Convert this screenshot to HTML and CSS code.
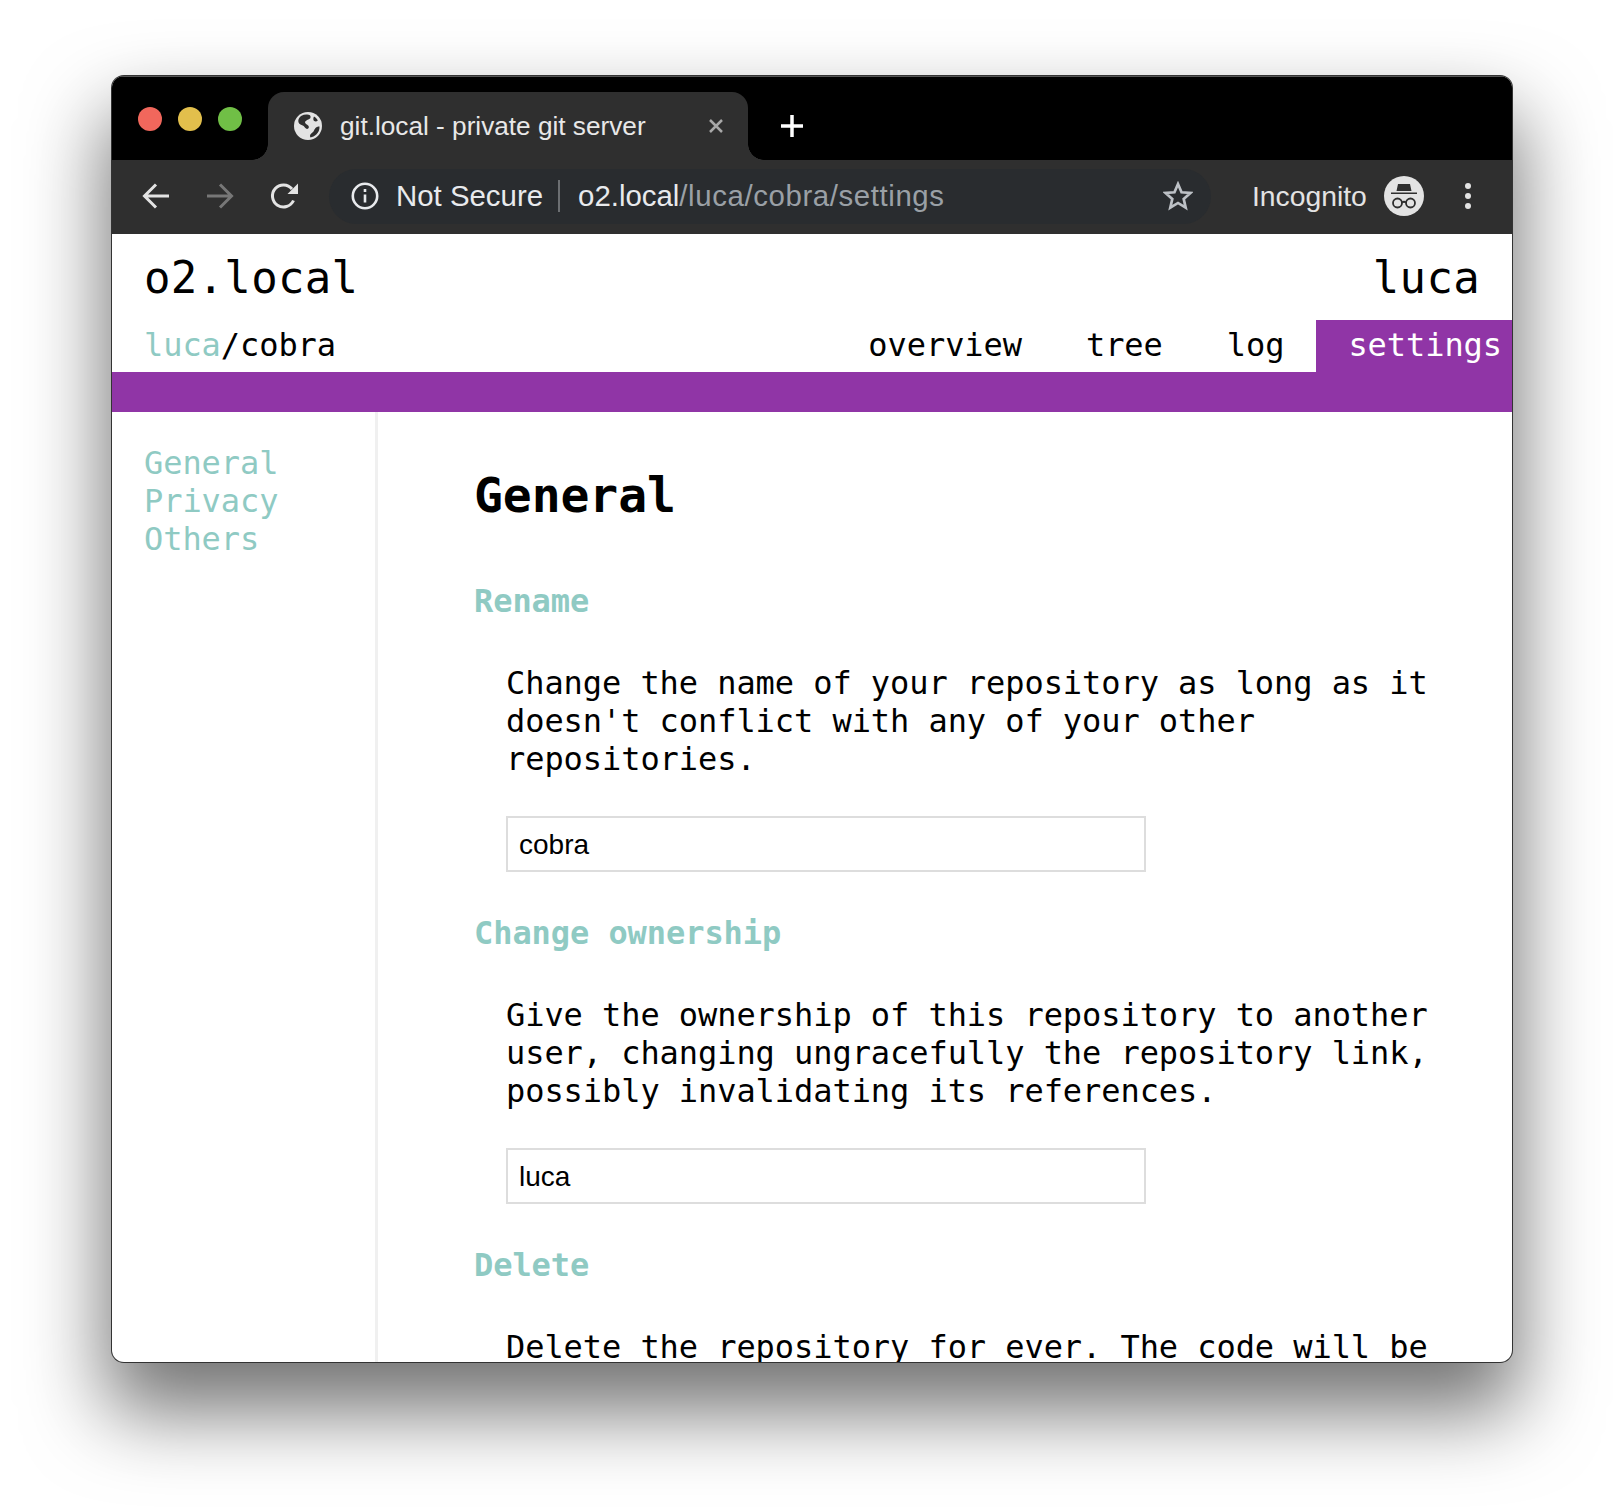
FILE: index.html
```html
<!DOCTYPE html>
<html>
<head>
  <title>git.local - private git server</title>
  <link rel="stylesheet" href="styles.css">
</head>
<body>
  <div class="window">
    <div class="tabstrip">
      <div class="lights">
        <span class="light red"></span>
        <span class="light yellow"></span>
        <span class="light green"></span>
      </div>
      <div class="browser-tab">
        <svg class="globe" viewBox="0 0 28 28">
          <circle cx="14" cy="14" r="14" fill="#e3e3e3"/>
          <path fill="#2f2f2f" d="M7 4C9 3 11 2.500 13 2.600c2.500.2 4 1 3.500 2.900-.5 2-3.500 2-5 3.800-1.300 1.500.5 2.800 2 3.700 1.500.9 1.800 2.500.7 3.500-1.200 1-2.700 0-3.700-1.500C9.500 13.500 8 13 6.500 12.500 4.800 11.800 3.800 9.500 4.500 7.500 5 6 6 5 7 4zM20 4.500c1.700 1 3 2.400 3.800 4-1 1-2.500 1.200-3.600.5-1.200-.8-1.100-3-.2-4.500zM25.500 14.500c.2 3-1 6-3.200 8-1.700 1.500-3.800 2.600-5.800 2.900-.8-.8-.6-2.200.3-3.300 1.400-1.600 2.700-2 3.200-3.500.5-1.600 1.600-3.200 3-3.700.9-.3 1.700-.4 2.500-.4z"/>
        </svg>
        <span class="tab-title">git.local - private git server</span>
        <svg class="tab-close" viewBox="0 0 16 16"><path d="M2 2l12 12M14 2L2 14"/></svg>
      </div>
      <svg class="new-tab" viewBox="0 0 24 24"><path d="M12 1v22M1 12h22"/></svg>
    </div>

    <div class="toolbar">
      <svg class="nav-icon" viewBox="0 0 28 28"><path d="M27 14H3M14 2.500L2.500 14 14 25.500"/></svg>
      <svg class="nav-icon dim" viewBox="0 0 28 28"><path d="M1 14h24M14 2.500L25.500 14 14 25.500"/></svg>
      <svg class="nav-icon" viewBox="0 0 28 28"><path d="M23.500 18.500A11 11 0 1 1 22 7"/><path class="solid" d="M28 1.500V12H17.500z"/></svg>
      <div class="omnibox">
        <svg class="info" viewBox="0 0 28 28">
          <circle cx="14" cy="14" r="12.200"/>
          <path d="M14 12.500v8M14 7v3"/>
        </svg>
        <span class="not-secure">Not Secure</span>
        <span class="omni-sep"></span>
        <span class="url">o2.local<span class="url-path">/luca/cobra/settings</span></span>
        <svg class="star" viewBox="0 0 28 28"><path d="M14 2.800l3.300 7.700 8.300.7-6.300 5.500 1.900 8.200L14 20.500l-7.200 4.400 1.900-8.200-6.300-5.500 8.300-.7z"/></svg>
      </div>
      <span class="incognito-label">Incognito</span>
      <svg class="incognito" viewBox="0 0 40 40">
        <circle cx="20" cy="20" r="20" fill="#e3e3e3"/>
        <path fill="#2f2f2f" d="M14 8h12l1.500 7h-15zM7 16.500h26v1.500H7z"/>
        <g fill="none" stroke="#2f2f2f" stroke-width="1.800">
          <circle cx="13.500" cy="27" r="4.500"/>
          <circle cx="26.500" cy="27" r="4.500"/>
          <path d="M18 26.500q2-1.500 4 0"/>
        </g>
      </svg>
      <div class="kebab"><span></span><span></span><span></span></div>
    </div>

    <div class="page">
      <header class="site-head">
        <a class="site-name">o2.local</a>
        <a class="site-user">luca</a>
      </header>
      <nav class="repo-nav">
        <div class="crumbs"><a class="link">luca</a>/cobra</div>
        <div class="repo-tabs">
          <a class="repo-tab">overview</a>
          <a class="repo-tab">tree</a>
          <a class="repo-tab">log</a>
          <a class="repo-tab active">settings</a>
        </div>
      </nav>
      <div class="purple-bar"></div>

      <div class="columns">
        <aside class="sidebar">
          <a class="link">General</a>
          <a class="link">Privacy</a>
          <a class="link">Others</a>
        </aside>
        <main class="content">
          <h1>General</h1>

          <h2>Rename</h2>
          <div class="section">
            <p>Change the name of your repository as long as it doesn't conflict with any of your other repositories.</p>
            <input class="field" type="text" value="cobra">
          </div>

          <h2>Change ownership</h2>
          <div class="section">
            <p>Give the ownership of this repository to another user, changing ungracefully the repository link, possibly invalidating its references.</p>
            <input class="field" type="text" value="luca">
          </div>

          <h2>Delete</h2>
          <div class="section">
            <p>Delete the repository for ever. The code will be</p>
          </div>
        </main>
      </div>
    </div>
  </div>
</body>
</html>
```

FILE: styles.css
```css
html, body {
  margin: 0;
  background: #fff;
}

body {
  height: 1510px;
  padding: 76px 112px 0;
  box-sizing: border-box;
  overflow: hidden;
  font-family: "DejaVu Sans Mono", monospace;
}

.window {
  width: 1400px;
  height: 1286px;
  display: flex;
  flex-direction: column;
  overflow: hidden;
  border-radius: 12px;
  background: #fff;
  box-shadow: 0 0 0 1px #333, 0 44px 80px 6px rgba(0, 0, 0, 0.55);
}

/* browser chrome */
.tabstrip {
  height: 84px;
  flex: none;
  display: flex;
  align-items: flex-end;
  background: #000;
  border-top: 1px solid #555;
  box-sizing: border-box;
}

.lights {
  width: 156px;
  height: 68px;
  padding: 15px 0 0 26px;
  box-sizing: border-box;
  display: flex;
  gap: 16px;
}

.light {
  width: 24px;
  height: 24px;
  border-radius: 50%;
}

.red { background: #f1675c; }
.yellow { background: #e2bf4c; }
.green { background: #70bf46; }

.browser-tab {
  position: relative;
  width: 480px;
  height: 68px;
  display: flex;
  align-items: center;
  padding: 0 24px 0 26px;
  box-sizing: border-box;
  background: #2f2f2f;
  border-radius: 16px 16px 0 0;
  color: #e8e8e8;
  font-family: "Liberation Sans", Arial, sans-serif;
  font-size: 26.2px;
}

.browser-tab::before,
.browser-tab::after {
  content: "";
  position: absolute;
  bottom: 0;
  width: 16px;
  height: 16px;
  background: radial-gradient(circle at 0 0, #000 15.500px, #2f2f2f 16px);
}

.browser-tab::before {
  left: -16px;
}

.browser-tab::after {
  right: -16px;
  background: radial-gradient(circle at 100% 0, #000 15.500px, #2f2f2f 16px);
}

.globe {
  width: 28px;
  height: 28px;
  margin-right: 18px;
}

.tab-title {
  flex: 1;
  white-space: nowrap;
}

.tab-close {
  width: 16px;
  height: 16px;
  fill: none;
  stroke: #a8a8a8;
  stroke-width: 2.500;
}

.new-tab {
  width: 24px;
  height: 24px;
  margin: 0 0 22px 32px;
  fill: none;
  stroke: #fff;
  stroke-width: 3.500;
}

.toolbar {
  height: 74px;
  flex: none;
  display: flex;
  align-items: center;
  padding: 0 0 2px 30px;
  box-sizing: border-box;
  background: #2f2f2f;
}

.nav-icon {
  width: 28px;
  height: 28px;
  margin-right: 36px;
  fill: none;
  stroke: #e3e3e3;
  stroke-width: 3;
}

.nav-icon.dim {
  stroke: #777;
}

.nav-icon .solid {
  fill: #e3e3e3;
  stroke: none;
}

.omnibox {
  width: 882px;
  height: 55px;
  margin: 0 0 0 -5px;
  padding: 0 18px 0 22px;
  box-sizing: border-box;
  display: flex;
  align-items: center;
  background: #292c2f;
  border-radius: 28px;
  font-family: "Liberation Sans", Arial, sans-serif;
  font-size: 29.4px;
  color: #e8eaed;
}

.info {
  width: 28px;
  height: 28px;
  margin-right: 17px;
  fill: none;
  stroke: #e8eaed;
  stroke-width: 2.600;
}

.not-secure {
  white-space: nowrap;
}

.omni-sep {
  width: 2px;
  height: 32px;
  margin: 0 18px 0 15px;
  background: #6c6f72;
}

.url {
  flex: 1;
  white-space: nowrap;
}

.url-path {
  color: #9aa0a6;
  letter-spacing: 0.6px;
}

.star {
  width: 30px;
  height: 30px;
  fill: none;
  stroke: #bdc1c6;
  stroke-width: 2.500;
}

.incognito-label {
  margin-left: 41px;
  color: #e3e3e3;
  font-family: "Liberation Sans", Arial, sans-serif;
  font-size: 28.3px;
}

.incognito {
  width: 40px;
  height: 40px;
  margin-left: 17px;
}

.kebab {
  display: flex;
  flex-direction: column;
  gap: 4px;
  margin-left: 41px;
}

.kebab span {
  width: 6px;
  height: 6px;
  border-radius: 50%;
  background: #e3e3e3;
}

/* site */
.page {
  flex: 1;
  min-height: 0;
  display: flex;
  flex-direction: column;
  color: #000;
}

.link {
  color: #8fcac3;
}

.site-head {
  height: 86px;
  flex: none;
  display: flex;
  justify-content: space-between;
  align-items: center;
  padding: 0 32px;
  font-size: 44px;
  letter-spacing: 0.3px;
}

.repo-nav {
  height: 52px;
  flex: none;
  display: flex;
  justify-content: space-between;
  padding-left: 32px;
  font-size: 32px;
  line-height: 50px;
  letter-spacing: -0.064px;
}

.repo-tabs {
  display: flex;
  margin-right: -22px;
}

.repo-tab {
  padding: 0 32px;
}

.repo-tab.active {
  background: #9035a6;
  color: #fff;
}

.purple-bar {
  height: 40px;
  flex: none;
  background: #9035a6;
}

.columns {
  flex: 1;
  min-height: 0;
  display: flex;
  overflow: hidden;
}

.sidebar {
  width: 266px;
  flex: none;
  padding: 32px 0 0 32px;
  box-sizing: border-box;
  border-right: 3px solid #f0f0f0;
  display: flex;
  flex-direction: column;
  font-size: 32px;
  line-height: 38px;
  letter-spacing: -0.064px;
}

.content {
  flex: 1;
  padding: 0 32px 0 96px;
  font-size: 32px;
  line-height: 38px;
  letter-spacing: -0.064px;
}

h1 {
  margin: 55px 0 59px;
  font-size: 48px;
  line-height: 56px;
}

h2 {
  margin: 42px 0 0;
  font-size: 32px;
  line-height: 38px;
  color: #8fcac3;
}

.section {
  padding-left: 32px;
}

.section p {
  margin: 44px 0 0;
}

.field {
  display: block;
  width: 640px;
  height: 56px;
  margin: 38px 0 0;
  padding: 1px 11px 0;
  box-sizing: border-box;
  border: 2px solid #ddd;
  background: #fff;
  color: #000;
  font-family: "Liberation Sans", Arial, sans-serif;
  font-size: 28px;
  letter-spacing: 0;
}
```
